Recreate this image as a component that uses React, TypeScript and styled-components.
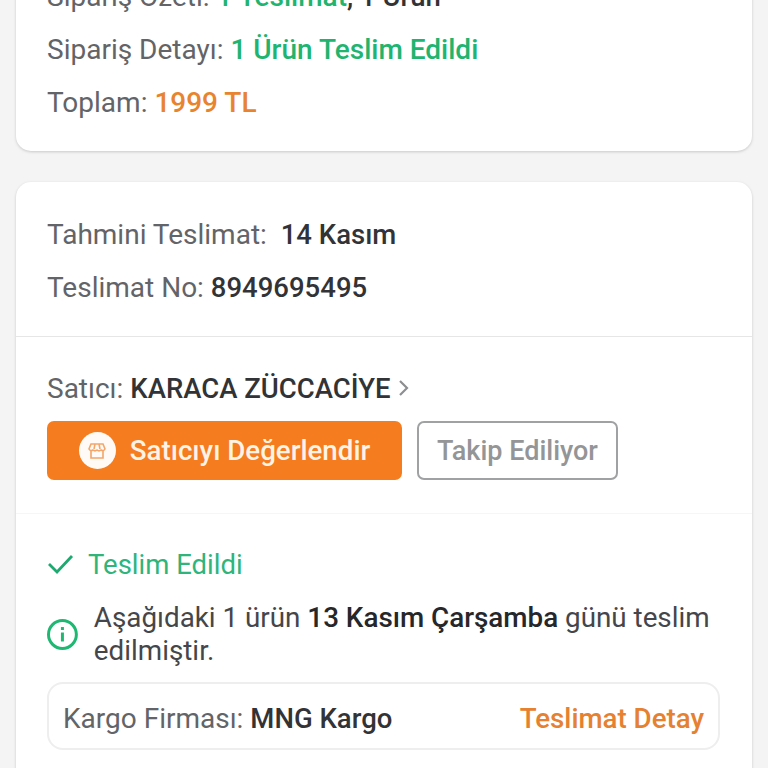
import React from "react";
import styled, { createGlobalStyle } from "styled-components";

const Global = createGlobalStyle`
  html, body { margin: 0; padding: 0; height: 768px; overflow: hidden; background: #f4f4f4; }
  body { font-family: Roboto, "Liberation Sans", sans-serif; }
`;

const Page = styled.div`
  display: flex;
  flex-direction: column;
  gap: 31px;
  padding: 0 16px;
  margin-top: -30px;
  height: 798px;
  overflow: hidden;
  font-size: 28px;
  color: #636467;
`;

const Card = styled.section`
  background: #fff;
  border-radius: 15px;
  box-shadow: 0 1px 3px rgba(0, 0, 0, 0.18);
  flex: none;
`;

const Section = styled.div<{ $line?: string; $pad?: string }>`
  padding: ${(p) => p.$pad ?? "0 31px"};
  border-bottom: ${(p) => (p.$line ? `1px solid ${p.$line}` : "none")};
`;

const Line = styled.div`
  height: 53px;
  line-height: 53px;
  white-space: nowrap;
`;

const Tone = styled.span<{ $c: string }>`
  color: ${(p) => p.$c};
  font-weight: 500;
`;

const Value = styled.span`
  color: #323336;
  font-weight: 500;
  font-size: 27.5px;
`;

const SellerRow = styled.div`
  display: flex;
  align-items: center;
  height: 34px;
  white-space: nowrap;

  svg {
    margin-left: 5px;
  }
`;

const Buttons = styled.div`
  display: flex;
  gap: 15px;
  margin-top: 16px;
`;

const Primary = styled.button`
  width: 355px;
  height: 59px;
  display: flex;
  align-items: center;
  justify-content: center;
  gap: 14px;
  border: 0;
  padding: 0;
  border-radius: 7px;
  background: #f57c1f;
  color: #fff3e6;
  font: 500 27.7px Roboto, sans-serif;
`;

const Badge = styled.span`
  width: 37px;
  height: 37px;
  border-radius: 50%;
  background: #fffaf5;
  display: flex;
  align-items: center;
  justify-content: center;
`;

const Outline = styled.button`
  width: 201px;
  height: 59px;
  box-sizing: border-box;
  border: 2px solid #a0a1a3;
  border-radius: 7px;
  background: #fff;
  color: #949597;
  padding: 0;
  font: 500 27px Roboto, sans-serif;
`;

const Status = styled.div`
  display: flex;
  align-items: center;
  gap: 14px;
  height: 34px;
  font-size: 27.5px;
  color: #2fb57c;
`;

const Info = styled.div`
  display: flex;
  align-items: center;
  gap: 16px;
  margin-top: 20px;
  color: #45464a;
  font-size: 27.8px;
  line-height: 33px;
`;

const Strong = styled.strong`
  font-weight: 500;
  color: #26272a;
`;

const InfoText = styled.div`
  width: 630px;
`;

const CargoBox = styled.div`
  display: flex;
  align-items: center;
  justify-content: space-between;
  box-sizing: border-box;
  height: 68px;
  width: 673px;
  margin-top: 15px;
  padding: 4px 14px 0;
  border: 2px solid #eeeeee;
  border-radius: 16px;
  white-space: nowrap;
`;

const DetailLink = styled.span`
  color: #e58131;
  font-weight: 500;
  font-size: 27.7px;
`;

export default function App() {
  return (
    <Page>
      <Global />
      <Card>
        <Section $pad="0 31px 22px">
          <Line>
            Sipariş Özeti: <Tone $c="#1fb46f">1 Teslimat</Tone>
            <Value>, 1 Ürün</Value>
          </Line>
          <Line>
            Sipariş Detayı: <Tone $c="#1fb46f">1 Ürün Teslim Edildi</Tone>
          </Line>
          <Line>
            Toplam: <Tone $c="#e8842f">1999 TL</Tone>
          </Line>
        </Section>
      </Card>
      <Card>
        <Section $pad="26px 31px 22px" $line="#e6e6e6">
          <Line>
            Tahmini Teslimat: &nbsp;<Value>14 Kasım</Value>
          </Line>
          <Line>
            Teslimat No: <Value>8949695495</Value>
          </Line>
        </Section>
        <Section $pad="34px 31px 33px" $line="#f6f6f6">
          <SellerRow>
            Satıcı:&nbsp;<Value>KARACA ZÜCCACİYE</Value>
            <svg width="18" height="20" viewBox="0 0 18 20" fill="none" stroke="#8d8e91" strokeWidth="2.2">
              <path d="M5 3l7 7-7 7" />
            </svg>
          </SellerRow>
          <Buttons>
            <Primary>
              <Badge>
                <svg width="20" height="20" viewBox="0 0 20 20" fill="none" stroke="#f3a66b" strokeWidth="1.6">
                  <path d="M4 3h12l2 5a2.7 2.7 0 0 1-4 1 3 3 0 0 1-4 0 3 3 0 0 1-4 0 2.7 2.7 0 0 1-4-1z" />
                  <path d="M4 10v7h12v-7M8 3l-1 5M12 3l1 5" />
                </svg>
              </Badge>
              Satıcıyı Değerlendir
            </Primary>
            <Outline>Takip Ediliyor</Outline>
          </Buttons>
        </Section>
        <Section $pad="33px 31px 40px">
          <Status>
            <svg width="27" height="20" viewBox="0 0 27 20" fill="none" stroke="#1fa971" strokeWidth="2.8">
              <path d="M2 10l8 8L25 2" />
            </svg>
            Teslim Edildi
          </Status>
          <Info>
            <svg width="31" height="31" viewBox="0 0 31 31" fill="none" stroke="#1fb873" strokeWidth="3">
              <circle cx="15.5" cy="15.5" r="14" />
              <path d="M15.5 13.5v9" />
              <path d="M15.5 8v3" />
            </svg>
            <InfoText>
              Aşağıdaki 1 ürün <Strong>13 Kasım Çarşamba</Strong> günü teslim edilmiştir.
            </InfoText>
          </Info>
          <CargoBox>
            <span>
              Kargo Firması: <Value>MNG Kargo</Value>
            </span>
            <DetailLink>Teslimat Detay</DetailLink>
          </CargoBox>
        </Section>
      </Card>
    </Page>
  );
}
